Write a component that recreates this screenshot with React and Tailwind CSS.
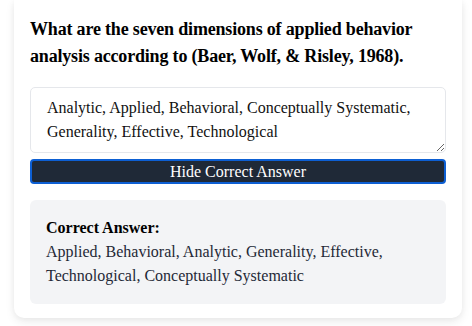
export default function App() {
  return (
    <div className="min-h-screen bg-white" style={{ fontFamily: '"Liberation Serif", "Times New Roman", serif' }}>
      <div className="ml-[14px] w-[448px] bg-white rounded-b-[10px] shadow-[0_4px_10px_rgba(0,0,0,0.08),0_0_6px_rgba(0,0,0,0.04)] px-4 pt-4 pb-[14px]">
        <h2 className="text-[18px] leading-[27px] font-bold text-black tracking-[-0.18px]">
          What are the seven dimensions of applied behavior analysis according to (Baer, Wolf, &amp; Risley, 1968).
        </h2>
        <textarea
          readOnly
          className="mt-[17px] block w-full h-[66px] border border-[#e5e7eb] rounded-[5px] px-4 py-2 text-[16px] leading-[24px] text-[#111] bg-white outline-none"
          defaultValue="Analytic, Applied, Behavioral, Conceptually Systematic, Generality, Effective, Technological"
        />
        <button className="mt-[6px] block w-full h-[25px] border-2 border-[#0d5fd3] rounded-[4px] bg-[#1f2937] text-white text-[16px] leading-[21px]">
          Hide Correct Answer
        </button>
        <div className="mt-4 bg-[#f3f4f6] rounded-md px-4 py-4 text-[16px] leading-[24px]">
          <div className="font-bold text-black">Correct Answer:</div>
          <div className="text-[#1f2937]">
            Applied, Behavioral, Analytic, Generality, Effective, Technological, Conceptually Systematic
          </div>
        </div>
      </div>
    </div>
  );
}
